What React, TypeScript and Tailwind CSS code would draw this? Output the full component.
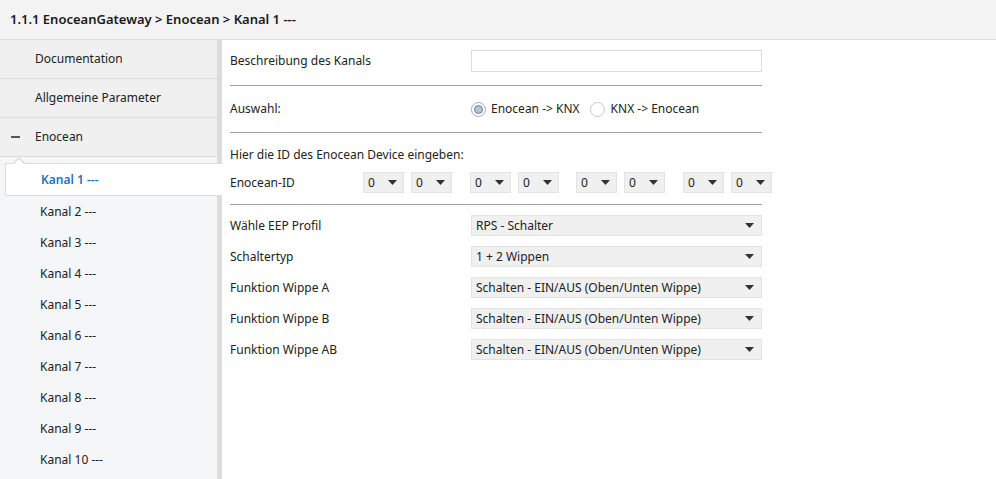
import React from "react";

const Caret = () => (
  <svg width="9" height="5" viewBox="0 0 9 5" className="shrink-0">
    <path d="M0 0 H9 L4.5 5 Z" fill="#333" />
  </svg>
);

const Sel = ({ v }: { v: string }) => (
  <div className="h-[21px] w-[291px] bg-[#f0f0f0] border border-[#e3e3e3] flex items-center justify-between pl-[4px] pr-[7px] text-[12px] text-[#222]">
    <span>{v}</span>
    <Caret />
  </div>
);

const Small = () => (
  <div className="shrink-0 h-[21px] w-[41px] bg-[#f0f0f0] border border-[#e3e3e3] flex items-center justify-between pl-[4px] pr-[6px] text-[12px] text-[#222]">
    <span>0</span>
    <Caret />
  </div>
);

export default function App() {
  const kanals = [2, 3, 4, 5, 6, 7, 8, 9, 10];
  return (
    <div className="w-[996px] h-[479px] overflow-hidden bg-white text-[#222]" style={{ fontFamily: '"Noto Sans", "Open Sans", sans-serif' }}>
      <div className="h-[40px] bg-[#f3f3f3] border-b border-[#dcdcdc] flex items-center pl-[10px] text-[13px] font-semibold text-[#1a1a1a]">
        1.1.1 EnoceanGateway &gt; Enocean &gt; Kanal 1 ---
      </div>
      <div className="flex h-[439px]">
        <div className="w-[222px] shrink-0 flex">
          <div className="w-[217px] flex flex-col bg-[#f5f6f8] relative">
            <div className="bg-[#f0f0f0]">
              <div className="h-[39px] flex items-center pl-[35px] text-[12px] border-b border-[#dcdcdc]">Documentation</div>
              <div className="h-[39px] flex items-center pl-[35px] text-[12px] border-b border-[#dcdcdc]">Allgemeine Parameter</div>
              <div className="h-[39px] flex items-center text-[12px] border-b border-[#dcdcdc]">
                <span className="w-[35px] flex justify-center"><span className="block w-[9px] h-[1.5px] bg-[#555] ml-[-4px]"></span></span>
                Enocean
              </div>
            </div>
            <div className="relative mt-[6px] ml-[5px] mr-[-5px] h-[33px] bg-white border border-[#dcdcdc] border-r-0 flex items-center pl-[35px] text-[12px] font-semibold text-[#1f6fbf] z-10">
              Kanal 1 ---
              <span className="absolute left-[6px] top-[-7px] w-0 h-0 border-l-[7px] border-r-[7px] border-b-[7px] border-l-transparent border-r-transparent border-b-[#dcdcdc]"></span>
              <span className="absolute left-[7px] top-[-5px] w-0 h-0 border-l-[6px] border-r-[6px] border-b-[6px] border-l-transparent border-r-transparent border-b-white"></span>
            </div>
            {kanals.map((k) => (
              <div key={k} className="h-[31px] flex items-center pl-[40px] text-[12px]">Kanal {k} ---</div>
            ))}
          </div>
          <div className="w-[5px] bg-[#dcdcdc]"></div>
        </div>
        <div className="flex-1 pl-[8px] pt-[10px]">
          <div className="w-[532px]">
            <div className="flex items-center h-[22px]">
              <div className="w-[241px] text-[12px]">Beschreibung des Kanals</div>
              <div className="w-[291px] h-[22px] border border-[#dcdcdc] bg-white"></div>
            </div>
            <div className="h-px bg-[#a0a0a0] mt-[13px]"></div>
            <div className="flex items-center h-[46px]">
              <div className="w-[241px] text-[12px]">Auswahl:</div>
              <div className="flex items-center text-[12px] gap-[5px]">
                <span className="w-[15px] h-[15px] rounded-full border border-[#a8a8a8] flex items-center justify-center bg-white">
                  <span className="w-[9px] h-[9px] rounded-full bg-[#b4c3d6] border border-[#6b7e99]"></span>
                </span>
                <span>Enocean -&gt; KNX</span>
                <span className="ml-[5px] w-[15px] h-[15px] rounded-full border border-[#c8c8c8] bg-white"></span>
                <span className="ml-[1px]">KNX -&gt; Enocean</span>
              </div>
            </div>
            <div className="h-px bg-[#a0a0a0]"></div>
            <div className="text-[12px] mt-[13px] h-[17px] flex items-center">Hier die ID des Enocean Device eingeben:</div>
            <div className="flex items-center mt-[9px] h-[21px]">
              <div className="w-[133px] shrink-0 text-[12px]">Enocean-ID</div>
              <div className="flex gap-[7px] shrink-0"><Small /><Small /></div>
              <div className="flex gap-[7px] shrink-0 ml-[18px]"><Small /><Small /></div>
              <div className="flex gap-[7px] shrink-0 ml-[17px]"><Small /><Small /></div>
              <div className="flex gap-[7px] shrink-0 ml-[18px]"><Small /><Small /></div>
            </div>
            <div className="h-px bg-[#a0a0a0] mt-[11px]"></div>
            <div className="flex flex-col gap-[10px] mt-[10px]">
              {[
                ["Wähle EEP Profil", "RPS - Schalter"],
                ["Schaltertyp", "1 + 2 Wippen"],
                ["Funktion Wippe A", "Schalten - EIN/AUS (Oben/Unten Wippe)"],
                ["Funktion Wippe B", "Schalten - EIN/AUS (Oben/Unten Wippe)"],
                ["Funktion Wippe AB", "Schalten - EIN/AUS (Oben/Unten Wippe)"],
              ].map(([l, v]) => (
                <div key={l} className="flex items-center">
                  <div className="w-[241px] text-[12px]">{l}</div>
                  <Sel v={v} />
                </div>
              ))}
            </div>
          </div>
        </div>
      </div>
    </div>
  );
}
